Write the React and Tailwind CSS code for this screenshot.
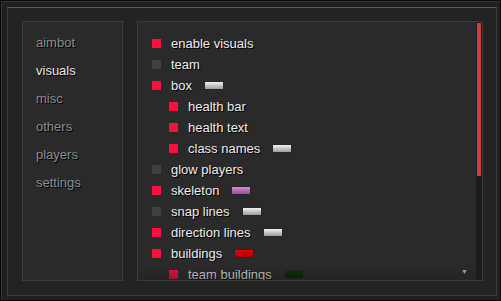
const tabs = ["aimbot", "visuals", "misc", "others", "players", "settings"]

const items = [
  { label: "enable visuals", on: true },
  { label: "team", on: false },
  { label: "box", on: true, swatch: "bg-gradient-to-b from-[#f2f2f2] to-[#9c9c9c]" },
  { label: "health bar", on: true, sub: true },
  { label: "health text", on: true, sub: true },
  { label: "class names", on: true, sub: true, swatch: "bg-gradient-to-b from-[#f2f2f2] to-[#9c9c9c]" },
  { label: "glow players", on: false },
  { label: "skeleton", on: true, swatch: "bg-gradient-to-b from-[#dc86dc] to-[#9a4c9a]" },
  { label: "snap lines", on: false, swatch: "bg-gradient-to-b from-[#f2f2f2] to-[#9c9c9c]" },
  { label: "direction lines", on: true, swatch: "bg-gradient-to-b from-[#f2f2f2] to-[#9c9c9c]" },
  { label: "buildings", on: true, swatch: "bg-gradient-to-b from-[#e60000] to-[#a80000]" },
  { label: "team buildings", on: true, sub: true, swatch: "bg-gradient-to-b from-[#003a00] to-[#002200]" },
]

const Sidebar = () => (
  <div className="w-[101px] shrink-0 border border-[#3b3b3b] bg-[#2a2a2a] pt-[7px] pl-[13px]">
    {tabs.map((t) => (
      <div
        key={t}
        className={`leading-[28px] text-[13px] [text-shadow:1px_1px_0_#000] ${
          t === "visuals" ? "text-[#e6e6e6]" : "text-[#8c8c8c]"
        }`}
      >
        {t}
      </div>
    ))}
  </div>
)

const Row = ({ label, on, sub, swatch }) => (
  <div className={`flex items-center h-[21px] ${sub ? "pl-[17px]" : ""}`}>
    <span className={`w-[9px] h-[9px] shrink-0 ${on ? "bg-[#ff0d3d]" : "bg-[#404040]"}`} />
    <span className="ml-[10px] text-[13px] leading-[21px] text-[#ececec] whitespace-nowrap [text-shadow:1px_1px_0_#000]">
      {label}
    </span>
    {swatch && (
      <span className={`ml-[12px] w-[20px] h-[9px] border border-[#262626] ${swatch}`} />
    )}
  </div>
)

export default function App() {
  return (
    <div className="w-[501px] h-[301px] bg-[#0a0a0a] p-px font-['Liberation_Sans',Arial,sans-serif]">
      <div className="h-full border-l border-t border-[#353535] bg-[#202020] pl-[5px] pt-[5px] pr-[3px] pb-[4px]">
        <div className="h-full flex border-x border-b border-[#3c3c3c] border-t border-t-[#e3173f] bg-[#232323] pt-[13px] pb-[14px] pl-[14px] pr-[13px] gap-[14px]">
          <Sidebar />
          <div className="flex-1 flex border border-[#3b3b3b] bg-[#2a2a2a] overflow-hidden relative">
            <div className="flex-1 pt-[11px] pl-[14px] relative overflow-hidden">
              {items.map((it) => (
                <Row key={it.label} {...it} />
              ))}
              <div className="absolute left-0 right-0 bottom-0 h-[16px] bg-gradient-to-b from-transparent to-[#1c1c1c]/45 pointer-events-none" />
              <div className="absolute right-[8px] bottom-[5px] text-[7px] leading-none text-[#9a9a9a]">▼</div>
            </div>
            <div className="w-[6px] bg-[#1b1b1b] px-px pt-px">
              <div className="h-[153px] bg-[#c6423f]" />
            </div>
          </div>
        </div>
      </div>
    </div>
  )
}
